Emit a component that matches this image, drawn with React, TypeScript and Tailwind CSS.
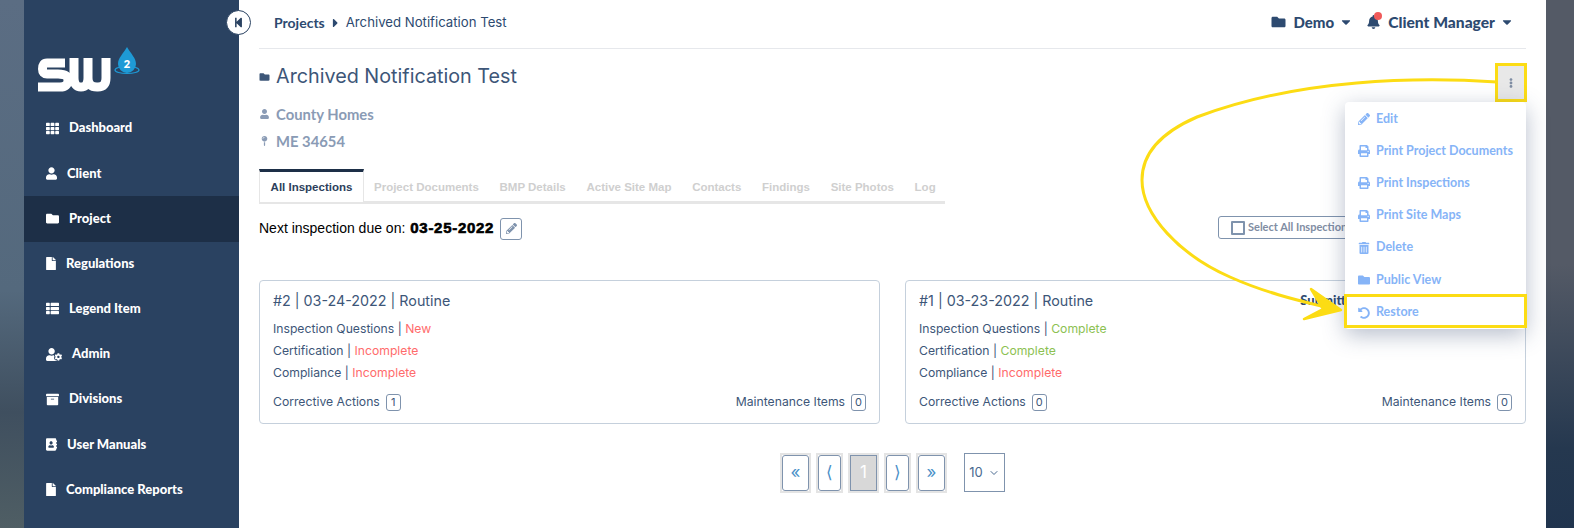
import type { ReactNode } from 'react';
import {
  FaAddressBook,
  FaArchive,
  FaBell,
  FaCaretDown,
  FaCaretRight,
  FaEllipsisV,
  FaFile,
  FaFolder,
  FaMapPin,
  FaPencilAlt,
  FaPrint,
  FaStepBackward,
  FaTh,
  FaThList,
  FaTrashAlt,
  FaUndoAlt,
  FaUser,
  FaUserCog,
} from 'react-icons/fa';
import { LuChevronDown } from 'react-icons/lu';

const navItems = [
  { label: 'Dashboard', icon: <FaTh className="h-[13px] w-[13px]" /> },
  { label: 'Client', icon: <FaUser className="h-[13px] w-[11px]" /> },
  { label: 'Project', icon: <FaFolder className="h-[13px] w-[13px]" />, active: true },
  { label: 'Regulations', icon: <FaFile className="h-[13px] w-[10px]" /> },
  { label: 'Legend Item', icon: <FaThList className="h-[13px] w-[13px]" /> },
  { label: 'Admin', icon: <FaUserCog className="h-[13px] w-[16px]" /> },
  { label: 'Divisions', icon: <FaArchive className="h-[13px] w-[13px]" /> },
  { label: 'User Manuals', icon: <FaAddressBook className="h-[13px] w-[11px]" /> },
  { label: 'Compliance Reports', icon: <FaFile className="h-[13px] w-[10px]" /> },
];

const tabs = ['Project Documents', 'BMP Details', 'Active Site Map', 'Contacts', 'Findings', 'Site Photos', 'Log'];

const menuItems = [
  { label: 'Edit', icon: <FaPencilAlt className="h-3 w-3" /> },
  { label: 'Print Project Documents', icon: <FaPrint className="h-3 w-3" /> },
  { label: 'Print Inspections', icon: <FaPrint className="h-3 w-3" /> },
  { label: 'Print Site Maps', icon: <FaPrint className="h-3 w-3" /> },
  { label: 'Delete', icon: <FaTrashAlt className="h-3 w-3" /> },
  { label: 'Public View', icon: <FaFolder className="h-3 w-3" /> },
];

function Logo() {
  return (
    <svg width="106" height="50" viewBox="0 0 106 50" fill="none">
      <g stroke="#fff" strokeWidth="9">
        <path d="M27 17H9Q4.500 17 4.500 23Q4.500 28 9 28H20Q30 28 30 34Q30 41 22 41H0" />
        <path d="M36 12V32Q36 41 43 41Q50 41 50 32V12M50 32Q50 41 59 41H60Q68 41 68 32V12" />
      </g>
      <path d="M89 1C93 8 98 12 98 18A9 9 0 0 1 80 18C80 12 85 8 89 1Z" fill="#1e9ad6" />
      <ellipse cx="89" cy="24" rx="12" ry="3.500" stroke="#1e9ad6" strokeWidth="1.200" />
      <text x="89" y="22" textAnchor="middle" fontSize="11" fontWeight="800" fill="#fff" fontFamily="Lato">
        2
      </text>
    </svg>
  );
}

function Status({ label, value, ok }: { label: string; value: string; ok?: boolean }) {
  return (
    <div className="h-[22px] leading-[22px]">
      {label} | <span className={ok ? 'text-[#8cc152]' : 'text-[#ff6b6b]'}>{value}</span>
    </div>
  );
}

function CountBadge({ n }: { n: number }) {
  return (
    <span className="ml-[6px] inline-flex h-[17px] w-[15px] items-center justify-center rounded-[3px] border border-[#7f93ad] text-[11px]">
      {n}
    </span>
  );
}

function InspectionCard({
  title,
  rows,
  corrective,
  submitted,
}: {
  title: string;
  rows: ReactNode;
  corrective: number;
  submitted?: boolean;
}) {
  return (
    <div className="relative h-[144px] flex-1 rounded-[4px] border border-[#c5d0dc] px-[13px] pt-[9px] font-[Inter] text-[12.200px] text-[#3d5678]">
      {submitted && (
        <span className="absolute top-[10px] right-[165px] font-[Lato] text-[13px] font-black text-[#2d4a70]">Submitted</span>
      )}
      <div className="mb-[7px] h-[21px] text-[14.300px] leading-[21px]">{title}</div>
      {rows}
      <div className="mt-[9px] flex items-center justify-between">
        <span className="flex items-center">
          Corrective Actions
          <CountBadge n={corrective} />
        </span>
        <span className="flex items-center">
          Maintenance Items
          <CountBadge n={0} />
        </span>
      </div>
    </div>
  );
}

function PageButton({ children, wide, active }: { children: ReactNode; wide?: boolean; active?: boolean }) {
  return (
    <div className={`border-2 border-[#e4e4e4] ${wide ? 'w-[31px]' : 'w-[27px]'} h-[40px]`}>
      <div
        className={`flex h-full items-center justify-center border border-[#7f93ad] text-[17px] ${
          active ? 'bg-[#d8d8d8] text-white' : 'rounded-[3px] text-[#4a90c8]'
        }`}
      >
        {children}
      </div>
    </div>
  );
}

export default function App() {
  return (
    <div className="relative flex h-[528px] w-[1574px] overflow-hidden bg-white font-[Lato]">
      <div className="w-[24px] bg-[linear-gradient(180deg,#5b6d83_0%,#54697d_55%,#3f4f5f_78%,#4f5e64_100%)]" />

      <aside className="w-[215px] shrink-0 bg-[#2a4261] text-white">
        <div className="flex h-[106px] items-start pt-[46px] pl-[14px]">
          <Logo />
        </div>
        {navItems.map((item) => (
          <div
            key={item.label}
            className={`flex h-[45.200px] items-center gap-[10px] pb-[1px] pl-[22px] text-[13px] font-black ${
              item.active ? 'bg-[#1d2f47]' : ''
            }`}
          >
            {item.icon}
            <span>{item.label}</span>
          </div>
        ))}
      </aside>

      <main className="relative min-w-0 flex-1 px-[20px]">
        <header className="flex h-[49px] items-center justify-between border-b border-[#e6e8ec] pb-[3px] text-[#2d4a70]">
          <div className="flex items-center pl-[15px]">
            <span className="text-[14px] font-bold">Projects</span>
            <FaCaretRight className="mx-[6px] h-[14px] w-[9px]" />
            <span className="font-[Inter] text-[13.200px]">Archived Notification Test</span>
          </div>
          <div className="flex items-center pr-[12px] text-[15px] font-black">
            <FaFolder className="mr-[8px] h-[14px] w-[15px]" />
            <span>Demo</span>
            <FaCaretDown className="ml-[5px] h-[14px] w-[14px]" />
            <span className="relative ml-[14px] mr-[8px]">
              <FaBell className="h-[14px] w-[13px]" />
              <span className="absolute -top-[3px] left-[7px] h-[8px] w-[8px] rounded-full bg-[#f05a5a]" />
            </span>
            <span className="text-[15.600px]">Client Manager</span>
            <FaCaretDown className="ml-[5px] h-[14px] w-[14px]" />
          </div>
        </header>

        <div className="mt-[15px] flex h-[26px] items-center text-[#3d5678]">
          <FaFolder className="mr-[6px] h-[10px] w-[11px]" />
          <h1 className="font-[Inter] text-[19.750px]">Archived Notification Test</h1>
        </div>

        <div className="mt-[13px] flex h-[22px] items-center text-[14.800px] font-bold text-[#8a9bb5]">
          <FaUser className="mr-[7px] ml-[1px] h-[10px] w-[9px]" />
          County Homes
        </div>
        <div className="mt-[5px] flex h-[22px] items-center text-[14.800px] font-bold text-[#8a9bb5]">
          <FaMapPin className="mr-[7px] ml-[1px] h-[10px] w-[9px]" />
          ME 34654
        </div>

        <div className="mt-[17px] flex h-[35px] w-[686px] items-start border-b-[3px] border-b-[#e6e6e6] font-['Liberation_Sans',sans-serif] text-[11.500px] font-bold">
          <div className="-mb-[3px] flex h-[33px] w-[105px] items-center justify-center border-x border-t-[3px] border-x-[#e6e6e6] border-t-[#1d2f47] bg-white pt-[1px] text-[#2d3f5c]">
            All Inspections
          </div>
          <div className="flex h-[35px] items-center gap-[20.700px] pt-[2px] pl-[10px] text-[#cfcfcf]">
            {tabs.map((t) => (
              <span key={t}>{t}</span>
            ))}
          </div>
        </div>

        <div className="mt-[12px] flex h-[23px] items-center justify-between">
          <div className="mt-[2px] flex items-center font-['Liberation_Sans',sans-serif] text-[14px] text-black">
            Next inspection due on:
            <b className="ml-[5px] text-[15px] font-black tracking-[0.700px] [-webkit-text-stroke:0.600px_#000]">03-25-2022</b>
            <span className="ml-[6px] flex h-[22px] w-[22px] items-center justify-center rounded-[3px] border border-[#7f93ad] text-[#7f93ad]">
              <FaPencilAlt className="h-[11px] w-[11px]" />
            </span>
          </div>
          <div className="mr-[120px] flex h-[23px] w-[188px] items-center rounded-[3px] border border-[#7f93ad] pl-[12px] text-[11px] font-bold text-[#7f8da3]">
            <span className="mr-[3px] h-[14px] w-[14px] rounded-[1px] border-2 border-[#7f93ad]" />
            Select All Inspections
          </div>
        </div>

        <div className="mt-[41px] flex gap-[25px]">
          <InspectionCard
            title="#2 | 03-24-2022 | Routine"
            corrective={1}
            rows={
              <>
                <Status label="Inspection Questions" value="New" />
                <Status label="Certification" value="Incomplete" />
                <Status label="Compliance" value="Incomplete" />
              </>
            }
          />
          <InspectionCard
            title="#1 | 03-23-2022 | Routine"
            corrective={0}
            submitted
            rows={
              <>
                <Status label="Inspection Questions" value="Complete" ok />
                <Status label="Certification" value="Complete" ok />
                <Status label="Compliance" value="Incomplete" />
              </>
            }
          />
        </div>

        <div className="mt-[29px] flex items-start justify-center font-[Inter]">
          <div className="flex gap-[5px]">
            <PageButton wide>«</PageButton>
            <PageButton>⟨</PageButton>
            <PageButton wide active>1</PageButton>
            <PageButton>⟩</PageButton>
            <PageButton wide>»</PageButton>
          </div>
          <div className="ml-[17px] flex h-[39px] w-[41px] items-center justify-center gap-[5px] border border-[#7f93ad] text-[13px] text-[#4a6a90]">
            10
            <LuChevronDown className="h-3 w-3" />
          </div>
        </div>
      </main>

      <div className="w-[28px] bg-[linear-gradient(180deg,#545a66_0%,#545a66_50%,#25384f_85%,#20344e_100%)]" />

      <div className="absolute top-[63px] left-[1495px] flex h-[39px] w-[32px] items-center justify-center border-[3px] border-[#fcdc14] bg-[#e8e8e8] text-[#7f8da3]">
        <FaEllipsisV className="h-[10px] w-[10px]" />
      </div>

      <div className="absolute top-[102px] left-[1345px] w-[181px] rounded-[4px] bg-white pt-[1px] text-[12.500px] font-bold text-[#86b4f7] shadow-[0_6px_22px_rgba(50,70,110,0.35)]">
        {menuItems.map((m) => (
          <div key={m.label} className="flex h-[32.200px] items-center gap-[6px] pl-[13px]">
            {m.icon}
            <span>{m.label}</span>
          </div>
        ))}
        <div className="flex h-[33px] items-center gap-[6px] pl-[13px]">
          <FaUndoAlt className="h-3 w-3" />
          <span>Restore</span>
        </div>
      </div>
      <div className="absolute top-[294px] left-[1344px] h-[34px] w-[183px] border-[3px] border-[#fcdc14]" />

      <svg className="pointer-events-none absolute top-0 left-0" width="1574" height="528" fill="none">
        <path
          d="M1497 82C1420 77 1300 78 1197 117C1160 133 1142 155 1142 180C1142 215 1180 255 1230 277C1270 295 1310 303 1337 310"
          stroke="#fcdc14"
          strokeWidth="3"
        />
        <path d="M1311 289L1341 310L1304 319L1323 309Z" fill="#fcdc14" stroke="#fcdc14" strokeWidth="2.500" strokeLinejoin="round" />
      </svg>

      <div className="absolute top-[10px] left-[226px] flex h-[25px] w-[25px] items-center justify-center rounded-full border border-[#2a4261] bg-white text-[#2a4261]">
        <FaStepBackward className="h-[11px] w-[11px]" />
      </div>
    </div>
  );
}
